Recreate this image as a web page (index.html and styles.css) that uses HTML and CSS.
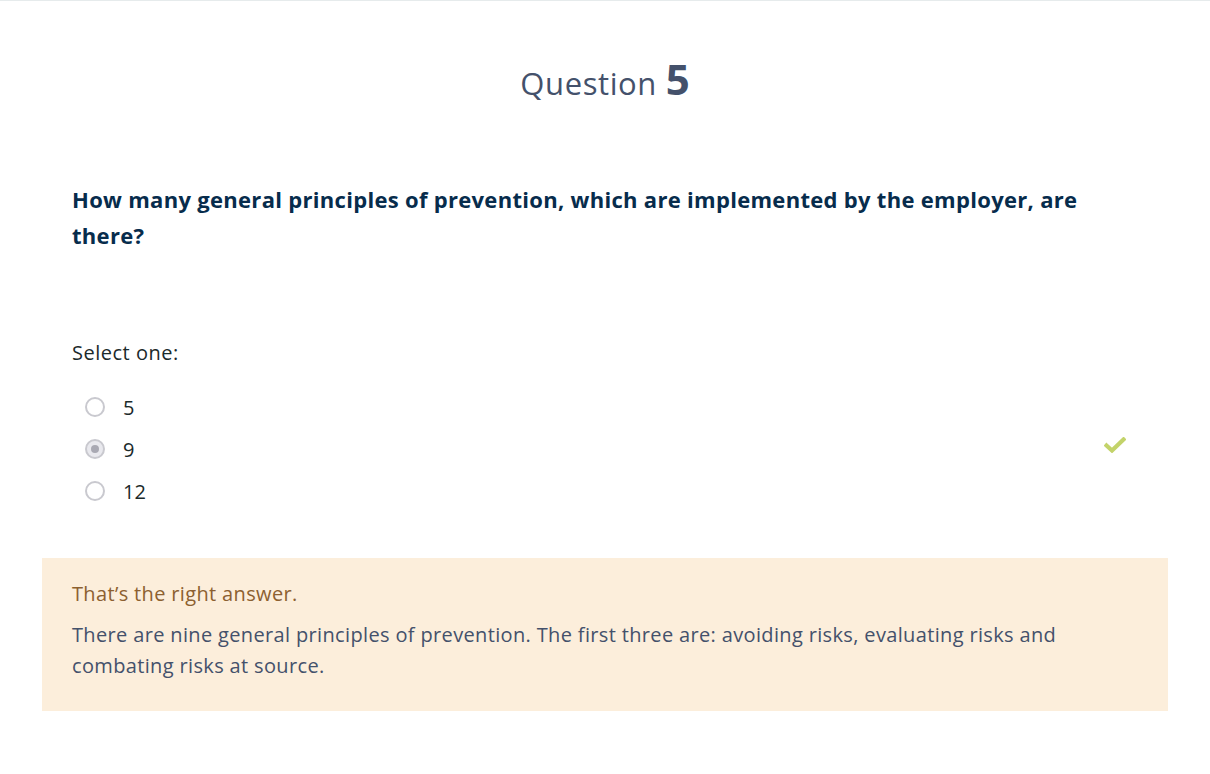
FILE: index.html
```html
<!DOCTYPE html>
<html lang="en">
<head>
<meta charset="utf-8">
<title>Question 5</title>
<link rel="stylesheet" href="styles.css">
</head>
<body>
<div class="page">
  <h1 class="qtitle">Question <span class="qnum">5</span></h1>
  <div class="content">
    <h2 class="qtext">How many general principles of prevention, which are implemented by the employer, are there?</h2>
    <div class="select">Select one:</div>
    <div class="options">
      <label class="opt"><span class="radio"></span><span class="otext">5</span></label>
      <label class="opt"><span class="radio checked"></span><span class="otext">9</span>
        <svg class="tick" width="22" height="16" viewBox="0 0 22 16"><path d="M2.5 8.5 L8 13.5 L19.5 2.5" fill="none" stroke="#c3d36a" stroke-width="4.2" stroke-linecap="square" stroke-linejoin="miter"/></svg>
      </label>
      <label class="opt"><span class="radio"></span><span class="otext">12</span></label>
    </div>
  </div>
  <div class="feedback">
    <p class="fb-right">That’s the right answer.</p>
    <p class="fb-general">There are nine general principles of prevention. The first three are: avoiding risks, evaluating risks and combating risks at source.</p>
  </div>
</div>
</body>
</html>
```
FILE: styles.css
```css
html, body {
  margin: 0;
  padding: 0;
  background: #ffffff;
}
body {
  border-top: 1px solid #e6ebec;
  font-family: "Open Sans", "Liberation Sans", sans-serif;
}
.page {
  padding: 0 42px 60px;
}
.qtitle {
  margin: 0;
  padding-top: 53px;
  text-align: center;
  font-weight: 400;
  font-size: 31px;
  line-height: 50px;
  letter-spacing: 0.6px;
  color: #44516b;
}
.qnum {
  font-weight: 700;
  font-size: 42px;
  letter-spacing: 0;
}
.content {
  padding: 0 30px;
}
.qtext {
  margin: 73px 0 0;
  font-size: 22px;
  line-height: 36px;
  font-weight: 700;
  letter-spacing: 0.3px;
  color: #072c4c;
}
.select {
  margin-top: 85px;
  font-size: 20px;
  line-height: 30px;
  letter-spacing: 0.5px;
  color: #1b2a2b;
}
.options {
  margin-top: 24px;
  display: flex;
  flex-direction: column;
  gap: 12px;
}
.opt {
  display: flex;
  align-items: center;
  height: 30px;
  padding-left: 13px;
  font-size: 20px;
  color: #1b2a2b;
}
.radio {
  box-sizing: border-box;
  width: 20px;
  height: 20px;
  border-radius: 50%;
  border: 2px solid #c9c9cf;
  background: #fff;
  margin-right: 18px;
  display: flex;
  align-items: center;
  justify-content: center;
}
.radio.checked {
  background: #e9e9ee;
}
.radio.checked::after {
  content: "";
  width: 8px;
  height: 8px;
  border-radius: 50%;
  background: #a9a9b3;
}
.tick {
  margin-left: auto;
  margin-right: 12px;
  margin-bottom: 8px;
}
.feedback {
  margin-top: 52px;
  background: #fceedb;
  padding: 20px 30px 30px;
}
.feedback p {
  margin: 0;
  font-size: 20px;
  line-height: 31px;
  letter-spacing: 0.35px;
}
.fb-right {
  color: #8c6030;
  margin-bottom: 10px !important;
}
.fb-general {
  color: #44516b;
}
```
